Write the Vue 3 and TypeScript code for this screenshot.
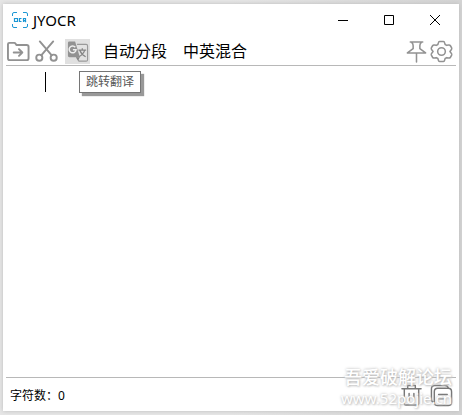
<script setup lang="ts">
import { ref } from 'vue'

const text = ref('')
const pinned = ref(false)

function clearText() {
  text.value = ''
}

function copyText() {
  navigator.clipboard?.writeText(text.value)
}
</script>

<template>
  <div class="desktop">
    <main class="window">
      <header class="titlebar">
        <svg class="logo" viewBox="0 0 16 16" fill="none" stroke="#1c97d4">
          <path d="M.5 4V2Q.5.5 2 .5H5M11 .5H14Q15.500.5 15.500 2V4M15.500 12V14Q15.500 15.500 14 15.500H11M5 15.500H2Q.5 15.500.5 14V12" />
          <path d="M2.500 6.500H5.500V9.500H2.500ZM9.500 6.500H7.500V9.500H9.500M11.500 10V6.500H13.500V8.500H11.500M12.500 8.500L14 10" stroke-width="1.200" />
        </svg>
        <h1 class="title">JYOCR</h1>
        <div class="captions">
          <button class="caption" aria-label="最小化">
            <svg viewBox="0 0 10 10"><path d="M0 5.500H10" /></svg>
          </button>
          <button class="caption" aria-label="最大化">
            <svg viewBox="0 0 10 10"><path d="M.5.5H9.500V9.500H.5Z" /></svg>
          </button>
          <button class="caption" aria-label="关闭">
            <svg viewBox="0 0 10 10"><path d="M0 0L10 10M10 0L0 10" /></svg>
          </button>
        </div>
      </header>

      <nav class="toolbar">
        <button class="tool" aria-label="打开">
          <svg viewBox="0 0 24 24" class="line">
            <path d="M1 4.500Q1 3 2.500 3H7.500Q8.500 3 9 4L9.800 5.200H20.500Q22.500 5.200 22.500 7V19Q22.500 21 20.500 21H3Q1 21 1 19Z" />
            <path d="M7 13H16M12.500 9.500L16 13L12.500 16.500" />
          </svg>
        </button>
        <button class="tool" aria-label="截图">
          <svg viewBox="0 0 24 24" class="line">
            <circle cx="4.500" cy="18.500" r="3.200" />
            <circle cx="19.500" cy="18.500" r="3.200" />
            <path d="M5 1.500L17.500 16M19 1.500L6.500 16" />
          </svg>
        </button>
        <div class="tip-anchor">
          <button class="tool hovered" aria-describedby="translate-tip" aria-label="跳转翻译">
            <svg viewBox="0 0 24 24">
              <path d="M11.500 4.500H21Q22.500 4.500 22.500 6V20.500Q22.500 22 21 22H13.500L11 18" fill="#e2e2e2" stroke="#999" stroke-width="1.200" />
              <path d="M13 10.500H21M17 8.500V10.500M19.500 10.500Q18.500 14.500 13.500 17.500M14.500 11Q16 15 20.500 17.500" fill="none" stroke="#858585" stroke-width="1.300" />
              <path d="M3.500 1.500H9.500L14.500 18H3.500Q2 18 2 16.500V3Q2 1.500 3.500 1.500Z" fill="#929292" />
              <path d="M9.700 7.500A3.600 3.600 0 1 0 10.500 10.200H7.200" fill="none" stroke="#eee" stroke-width="1.600" />
              <path d="M10.500 18H14.500L12.500 21.500Z" fill="#858585" />
            </svg>
          </button>
          <div id="translate-tip" class="tooltip" role="tooltip">跳转翻译</div>
        </div>
        <div class="modes">
          <button class="mode">自动分段</button>
          <button class="mode">中英混合</button>
        </div>
        <div class="right">
          <button class="tool" aria-label="置顶" :aria-pressed="pinned" @click="pinned = !pinned">
            <svg viewBox="0 0 24 24" class="line thin">
              <path d="M5.500 2H18.500M7 2.500Q8.500 4 8.500 6V9L2.500 13.500H21.500L15.500 9V6Q15.500 4 17 2.500M12 14V23" />
            </svg>
          </button>
          <button class="tool" aria-label="设置">
            <svg viewBox="0 0 24 24" class="line thin">
              <path d="M10 1.500H14Q15 1.500 15.300 3L15.800 4.700L17.500 5.600L19.500 5.200Q20.700 5 21.300 6L22.600 8.300Q23 9.300 22.200 10.200L20.800 12L22.200 13.800Q23 14.700 22.600 15.700L21.300 18Q20.700 19 19.500 18.800L17.500 18.400L15.800 19.300L15.300 21Q15 22.500 14 22.500H10Q9 22.500 8.700 21L8.200 19.300L6.500 18.400L4.500 18.800Q3.300 19 2.700 18L1.400 15.700Q1 14.700 1.800 13.800L3.200 12L1.800 10.200Q1 9.300 1.400 8.300L2.700 6Q3.300 5 4.500 5.200L6.500 5.600L8.200 4.700L8.700 3Q9 1.500 10 1.500Z" />
              <circle cx="12" cy="12" r="4" />
            </svg>
          </button>
        </div>
      </nav>

      <section class="editor">
        <textarea v-model="text" class="input" aria-label="识别结果" spellcheck="false"></textarea>
        <span v-if="!text" class="caret"></span>
      </section>

      <footer class="status">
        <span class="count">字符数：{{ text.length }}</span>
        <div class="right">
          <button class="tool" aria-label="清空" @click="clearText">
            <svg viewBox="0 0 24 24" class="line dark">
              <path d="M2 5H22M8 4.500V1.500H16V4.500M4.500 5.500V20.500Q4.500 22 6 22H18Q19.500 22 19.500 20.500V5.500M9.500 10V17M14.500 10V17" />
            </svg>
          </button>
          <button class="tool" aria-label="复制" @click="copyText">
            <svg viewBox="0 0 24 24" class="line dark">
              <path d="M4.500 19.500Q1.500 19 1.500 16V5Q1.500 1.500 5 1.500H15.500Q18.500 1.500 19 4" />
              <rect x="4.500" y="4.500" width="18" height="18" rx="3.500" />
              <path d="M9 11H18M9 15.500H15" />
            </svg>
          </button>
        </div>
      </footer>

      <div class="watermark">
        <span class="mark-name">吾爱破解论坛</span>
        <span class="mark-site">www.52pojie.cn</span>
      </div>
    </main>
  </div>
</template>

<style>
body {
  background: #e3e3e3;
}
</style>

<style scoped>
.desktop {
  box-sizing: border-box;
  height: 100vh;
  padding: 4px 3px;
  display: flex;
  background: linear-gradient(to right, #e6e6e6 50%, #d4d4d4);
  color: #000;
  font-family: "Noto Sans", "Noto Sans CJK SC", sans-serif;
}
.window {
  position: relative;
  flex: 1;
  min-width: 0;
  display: flex;
  flex-direction: column;
  background: #fff;
  box-shadow: 0 0 4px #bbb;
}
button {
  border: 0;
  padding: 0;
  background: none;
  color: inherit;
  font-family: inherit;
}
.titlebar {
  height: 31px;
  display: flex;
  align-items: center;
  padding: 0 1px 0 9px;
}
.logo {
  width: 16px;
  height: 16px;
  margin-right: 5px;
}
.title {
  margin: 0;
  font-size: 15px;
  line-height: 20px;
  font-weight: 400;
}
.captions {
  display: flex;
  margin-left: auto;
}
.caption {
  width: 46px;
  height: 30px;
  display: flex;
  align-items: center;
  justify-content: center;
}
.caption svg {
  width: 10px;
  height: 10px;
  fill: none;
  stroke: #000;
}
.toolbar {
  height: 28px;
  display: flex;
  align-items: center;
  gap: 3px;
  margin: 0 3px;
  padding: 2px 2px 0 0;
  border-bottom: 1px solid #b8b8b8;
}
.tool {
  width: 25px;
  height: 25px;
  display: flex;
  align-items: center;
  justify-content: center;
}
.tool svg {
  width: 23px;
  height: 23px;
}
.hovered {
  background: #e0e0e0;
}
.line {
  fill: none;
  stroke: #929292;
  stroke-width: 2;
  stroke-linejoin: round;
  stroke-linecap: round;
}
.thin {
  stroke-width: 1.6;
}
.dark {
  stroke: #777;
  stroke-width: 1.5;
}
.tip-anchor {
  position: relative;
  margin-left: 3px;
}
.tooltip {
  position: absolute;
  z-index: 1;
  top: 32px;
  left: 14px;
  padding: 0 6px;
  border: 1px solid #767676;
  background: #fff;
  box-shadow: 3px 3px 1px #999;
  color: #575757;
  font-size: 12px;
  line-height: 20px;
  white-space: nowrap;
}
.modes {
  display: flex;
  gap: 16px;
  margin-left: 10px;
}
.mode {
  font-size: 16px;
  line-height: 24px;
  white-space: nowrap;
}
.right {
  display: flex;
  margin-left: auto;
}
.editor {
  position: relative;
  flex: 1;
  display: flex;
  margin: 0 3px;
}
.input {
  flex: 1;
  border: 0;
  outline: 0;
  resize: none;
  padding: 6px 39px;
  background: transparent;
  font: 16px/20px "Noto Sans", "Noto Sans CJK SC", sans-serif;
}
.caret {
  position: absolute;
  top: 6px;
  left: 39px;
  width: 1px;
  height: 20px;
  background: #000;
}
.status {
  height: 31px;
  display: flex;
  align-items: center;
  margin: 0 3px;
  padding: 2px 2px 0 4px;
  border-top: 1px solid #b8b8b8;
}
.count {
  font-size: 12px;
  line-height: 20px;
}
.status .right {
  gap: 5px;
}
.watermark {
  position: absolute;
  right: 7px;
  bottom: 3px;
  display: flex;
  flex-direction: column;
  align-items: flex-end;
  color: #fff;
  text-shadow: 0 0 3px #b0b0b0, 1px 1px 2px #d0d0d0;
  pointer-events: none;
}
.mark-name {
  font-size: 18px;
  font-weight: 500;
  line-height: 22px;
}
.mark-site {
  font-size: 15px;
  line-height: 20px;
}
</style>
